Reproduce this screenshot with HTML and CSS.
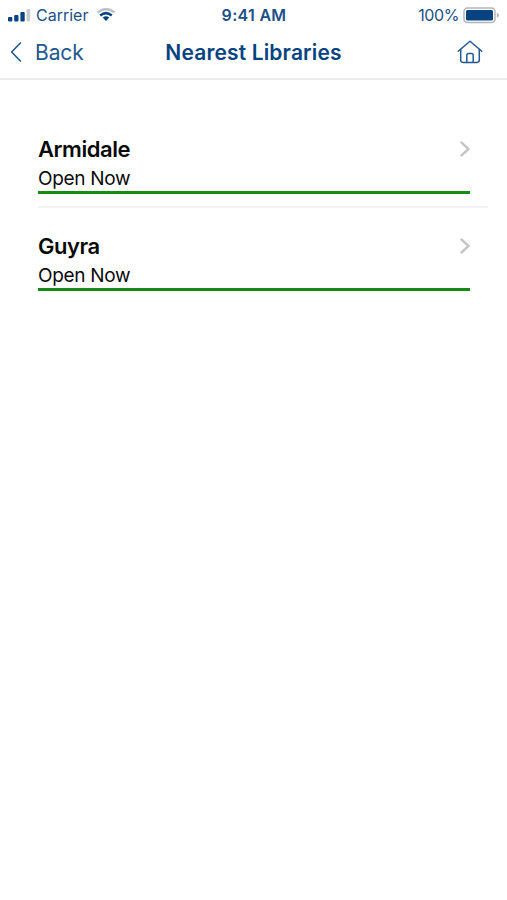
FILE: index.html
```html
<!DOCTYPE html>
<html lang="en">
<head>
  <meta charset="UTF-8">
  <meta name="viewport" content="width=device-width, initial-scale=1">
  <title>Nearest Libraries</title>
  <link rel="stylesheet" href="styles.css">
</head>
<body>

  <div class="status-bar">
    <div class="status-left">
      <svg class="signal" width="23" height="13" viewBox="0 0 23 13">
        <rect x="0" y="8" width="4.3" height="4.5" rx="1" fill="#064380"/>
        <rect x="6.2" y="6" width="4.3" height="6.5" rx="1" fill="#064380"/>
        <rect x="12.4" y="3" width="4.3" height="9.5" rx="1" fill="#064380"/>
        <rect x="18.6" y="0" width="3.6" height="12.5" rx="1" fill="#c9cbcd"/>
      </svg>
      <span class="carrier">Carrier</span>
      <svg class="wifi" width="20" height="14" viewBox="0 0 20 14" fill="none">
        <path d="M1.5 4.4Q10 -2.2 18.5 4.4" stroke="#bfc3c7" stroke-width="2.5"/>
        <path d="M4.2 7.4Q10 2.8 15.8 7.4" stroke="#064380" stroke-width="2.5"/>
        <path d="M6.7 9.6Q10 7 13.3 9.6L10 13Z" fill="#064380"/>
      </svg>
    </div>
    <span class="time">9:41 AM</span>
    <div class="status-right">
      <span class="percent">100%</span>
      <svg class="battery" width="37" height="17" viewBox="0 0 37 17">
        <rect x="1" y="1" width="31" height="14.6" rx="3.5" fill="#fff" stroke="#b3b7bc" stroke-width="1.5"/>
        <rect x="3" y="3" width="27" height="10.6" rx="1.5" fill="#064380"/>
        <path d="M33.8 5.8Q36 6.4 36 8.3Q36 10.2 33.8 10.8Z" fill="#b3b7bc"/>
      </svg>
    </div>
  </div>

  <div class="nav-bar">
    <a class="back">
      <svg width="12" height="22" viewBox="0 0 12 22" fill="none" stroke="#225990" stroke-width="1.6">
        <path d="M10.8 1.5L1.7 11L10.8 20.5"/>
      </svg>
      <span class="back-text">Back</span>
    </a>
    <h1>Nearest Libraries</h1>
    <a class="home">
      <svg width="26" height="24" viewBox="0 0 26 24" fill="none" stroke="#225990" stroke-width="1.5" stroke-linecap="round" stroke-linejoin="round">
        <path d="M1.2 11.3L13 1.3L24.8 11.3"/>
        <path d="M3.7 9.4V20.1Q3.7 22.4 6 22.4H20Q22.3 22.4 22.3 20.1V9.4"/>
        <path d="M9.8 22.2V15.3Q9.8 13.5 11.6 13.5H14.4Q16.2 13.5 16.2 15.3V22.2"/>
      </svg>
    </a>
  </div>

  <div class="library-list">
    <div class="library">
      <div class="library-row">
        <h2>Armidale</h2>
        <svg class="arrow" width="12" height="18" viewBox="0 0 12 18"><path d="M1.8 1.8L9.5 9L1.8 16.2"/></svg>
      </div>
      <p class="status">Open Now</p>
    </div>
    <div class="library">
      <div class="library-row">
        <h2>Guyra</h2>
        <svg class="arrow" width="12" height="18" viewBox="0 0 12 18"><path d="M1.8 1.8L9.5 9L1.8 16.2"/></svg>
      </div>
      <p class="status">Open Now</p>
    </div>
  </div>

</body>
</html>
```
FILE: styles.css
```css
body {
  margin: 0;
  font-family: Inter, sans-serif;
  background-color: #fff;
  color: #0a0a0a;
}

.status-bar {
  display: grid;
  grid-template-columns: 1fr auto 1fr;
  align-items: center;
  height: 30px;
  padding: 0 7px 0 8px;
  color: #1d5088;
  font-size: 16px;
}

.status-left, .status-right {
  display: flex;
  align-items: center;
}

.status-right {
  justify-content: flex-end;
}

.carrier {
  margin-left: 5px;
}

.wifi {
  margin-left: 8px;
}

.time {
  font-weight: 600;
  font-size: 16px;
  letter-spacing: 0.3px;
}

.percent {
  margin-right: 4px;
  letter-spacing: -0.4px;
}

.nav-bar {
  display: grid;
  grid-template-columns: 1fr auto 1fr;
  align-items: center;
  height: 44px;
  padding: 0 24px 4px 10px;
  border-bottom: 2px solid #ededed;
}

.back {
  display: flex;
  align-items: center;
  color: #225990;
  font-size: 21px;
}

.back-text {
  margin-left: 13px;
  letter-spacing: -0.1px;
}

/* side paddings differ, so nudge the title back to the middle */
h1 {
  margin: 0 -7px 0 7px;
  color: #064380;
  font-size: 21px;
  font-weight: 600;
  letter-spacing: 0.15px;
}

.home {
  display: flex;
  justify-content: flex-end;
}

.library-list {
  padding: 31px 19px 0 38px;
}

.library {
  height: 94.5px;
  border-bottom: 2px solid #f3f3f3;
}

.library:last-child {
  border-bottom: none;
}

.library-row {
  display: flex;
  justify-content: space-between;
  align-items: center;
  height: 28px;
  padding: 24px 17px 0 0;
}

h2 {
  margin: 0;
  font-size: 22px;
  font-weight: 600;
  letter-spacing: -0.45px;
}

.arrow {
  fill: none;
  stroke: #c5c5c5;
  stroke-width: 2.5;
}

.status {
  margin: 0 18px 0 0;
  height: 28px;
  line-height: 31px;
  font-size: 19px;
  letter-spacing: -0.3px;
  border-bottom: 3px solid #168a16;
}
```
